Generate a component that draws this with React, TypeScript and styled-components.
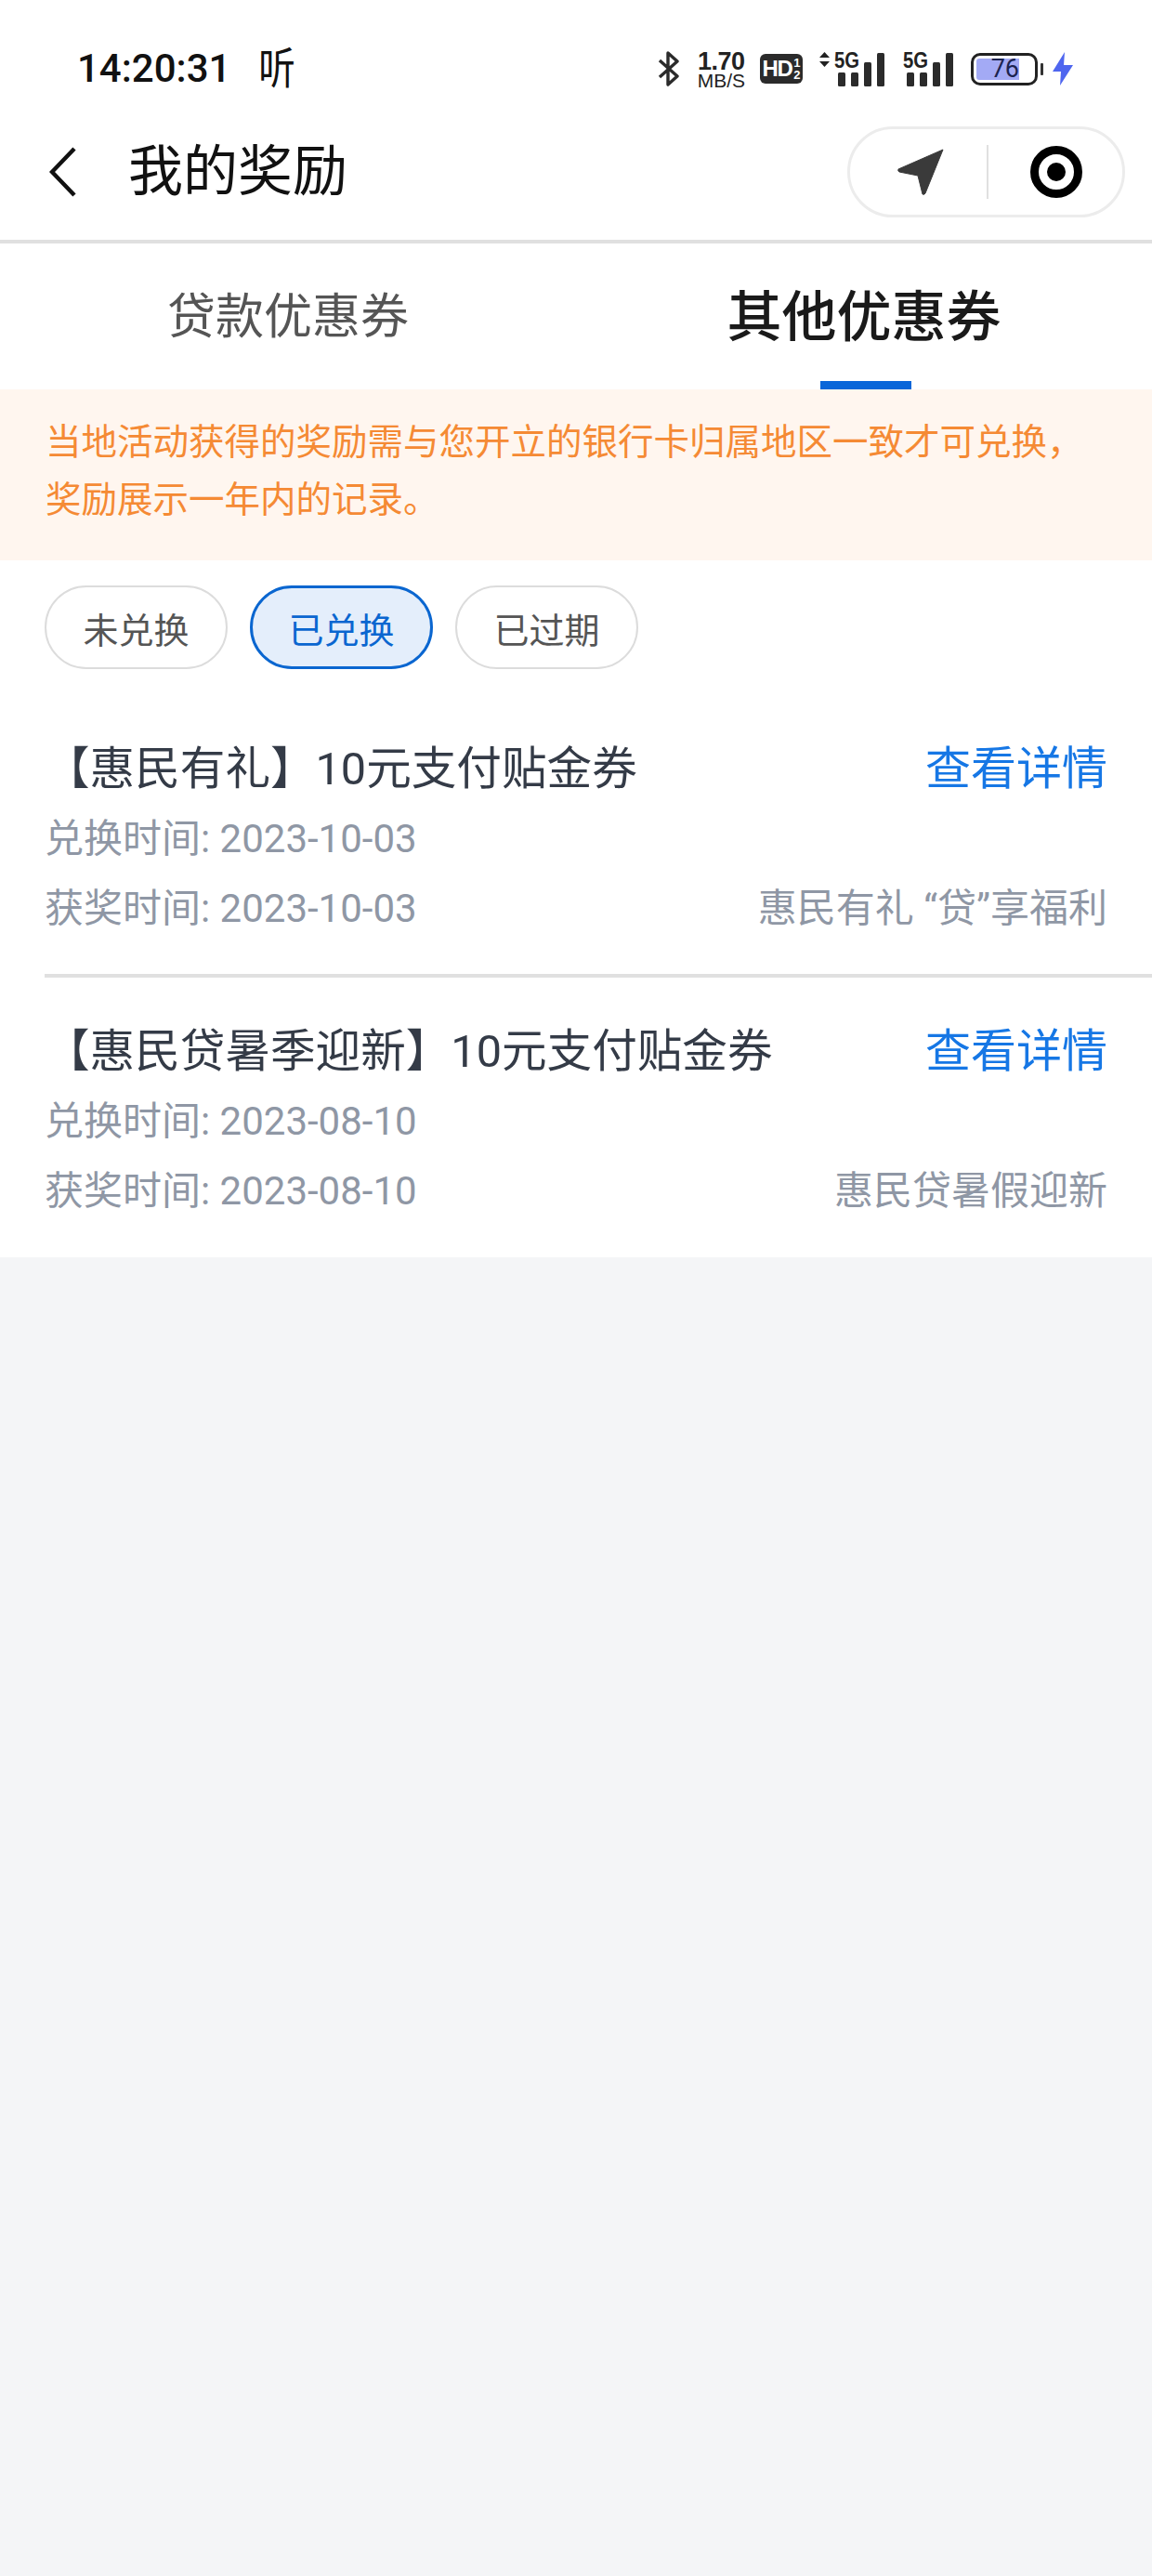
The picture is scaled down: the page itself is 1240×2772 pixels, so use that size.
import styled, { createGlobalStyle } from 'styled-components';

const GlobalStyle = createGlobalStyle`
  html, body {
    margin: 0;
    padding: 0;
    background: #f4f5f7;
  }
  * {
    box-sizing: border-box;
  }
`;

const FONT = `Roboto, "Noto Sans CJK SC", sans-serif`;

const Page = styled.main`
  width: 1240px;
  min-height: 2772px;
  background: #f4f5f7;
  font-family: ${FONT};
`;

const Top = styled.header`
  background: #fff;
  border-bottom: 4px solid #e0e0e0;
`;

const StatusBar = styled.div`
  height: 116px;
  padding: 32px 85px 0 83px;
  display: flex;
  align-items: center;
  justify-content: space-between;
`;

const StatusLeft = styled.div`
  display: flex;
  align-items: center;
  gap: 28px;
`;

const Clock = styled.span`
  font-size: 42px;
  font-weight: 500;
  line-height: 42px;
  color: #111;
`;

const ListenGlyph = styled.span`
  font-size: 44px;
  line-height: 44px;
  font-weight: 400;
  color: #111;
  display: inline-block;
  transform: scale(0.9, 1.05);
`;

const StatusRight = styled.div`
  display: flex;
  align-items: center;
`;

const Speed = styled.div`
  margin: 0 16px 0 19px;
  display: flex;
  flex-direction: column;
  align-items: center;
  color: #222;
  font-family: 'Liberation Sans', sans-serif;
`;

const SpeedValue = styled.span`
  font-size: 27px;
  line-height: 24px;
  font-weight: 700;
  letter-spacing: -0.5px;
`;

const SpeedUnit = styled.span`
  font-size: 21px;
  line-height: 17px;
  letter-spacing: 0;
`;

const HdBadge = styled.div`
  width: 46px;
  height: 32px;
  margin-right: 17px;
  border-radius: 6px;
  background: #2b2b2b;
  color: #fff;
  display: flex;
  align-items: center;
  justify-content: center;
  font-family: 'Liberation Sans', sans-serif;
  font-weight: 700;
  font-size: 24px;
  letter-spacing: -1.5px;
`;

const HdFraction = styled.span`
  display: flex;
  flex-direction: column;
  align-items: center;
  font-size: 13px;
  line-height: 13px;
  margin-left: 2px;
  letter-spacing: 0;
`;

const SignalSvg = styled.svg`
  overflow: visible;
`;

const SignalGap = styled.div`
  width: 21px;
`;

const Battery = styled.div`
  position: relative;
  width: 72px;
  height: 35px;
  margin-left: 19px;
  border: 3px solid #222;
  border-radius: 10px;
  display: flex;
  align-items: center;
  justify-content: flex-end;
  padding-right: 17px;
  color: #1c2350;
  font-size: 27px;
  font-weight: 400;
`;

const BatteryFill = styled.div<{ $level: number }>`
  position: absolute;
  left: 3px;
  top: 3px;
  bottom: 3px;
  width: ${(props) => props.$level * 60}px;
  background: #a3aaf5;
  border-radius: 3px 0 0 3px;
`;

const BatteryText = styled.span`
  position: relative;
  line-height: 27px;
`;

const BatteryCap = styled.div`
  width: 3px;
  height: 13px;
  margin-left: 3px;
  background: #333;
  border-radius: 1px;
`;

const Bolt = styled.svg`
  margin-left: 10px;
`;

const NavBar = styled.nav`
  height: 142px;
  padding: 0 29px 5px 53px;
  display: flex;
  align-items: center;
`;

const PageTitle = styled.h1`
  margin: 0 0 0 55px;
  flex: 1;
  font-size: 59px;
  line-height: 64px;
  font-weight: 400;
  color: #111;
`;

const Capsule = styled.div`
  width: 299px;
  height: 98px;
  border: 3px solid #ececec;
  border-radius: 49px;
  display: flex;
  align-items: center;
  padding-left: 51px;
`;

const CapsuleDivider = styled.div`
  width: 2px;
  height: 58px;
  margin: 0 45px 0 46px;
  background: #e0e0e0;
`;

const Tabs = styled.div`
  height: 157px;
  background: #fff;
  display: flex;
`;

const Tab = styled.div<{ $active?: boolean }>`
  position: relative;
  flex: 1;
  display: flex;
  justify-content: center;
  padding-top: 45px;
  font-size: ${(props) => (props.$active ? '59px' : '52px')};
  line-height: 70px;
  font-weight: ${(props) => (props.$active ? 500 : 400)};
  color: ${(props) => (props.$active ? '#1a1a1a' : '#555')};
  ${(props) =>
    props.$active &&
    `
    &::after {
      content: '';
      position: absolute;
      left: 263px;
      bottom: 0;
      width: 98px;
      height: 9px;
      background: #0a66d9;
    }
  `}
`;

const Notice = styled.div`
  height: 184px;
  padding: 26px 48px 0 49px;
  background: #fff6ef;
  color: #f58a34;
  font-size: 38.5px;
  line-height: 62px;
`;

const Filters = styled.div`
  background: #fff;
  padding: 27px 48px 30px;
  display: flex;
  gap: 24px;
`;

const Chip = styled.div<{ $active?: boolean }>`
  width: 197px;
  height: 90px;
  border-radius: 45px;
  display: flex;
  align-items: center;
  justify-content: center;
  font-size: 38px;
  color: ${(props) => (props.$active ? '#0a66d0' : '#555')};
  background: ${(props) => (props.$active ? '#e4eefb' : '#fff')};
  border: ${(props) => (props.$active ? '3px solid #0a66d0' : '2px solid #dcdcdc')};
`;

const List = styled.section`
  background: #fff;
  padding: 0 0 1px 48px;
`;

const Reward = styled.article`
  padding: 47px 48px 33px 0;
  & + & {
    padding-top: 49px;
    border-top: 4px solid #e0e0e0;
  }
`;

const Row = styled.div`
  display: flex;
  justify-content: space-between;
  align-items: center;
  height: 75px;
`;

const TitleRow = styled(Row)`
  height: 62px;
  margin-bottom: 6px;
`;

const RewardTitle = styled.div`
  font-size: 48.6px;
  line-height: 62px;
  color: #343b47;
`;

const Detail = styled.div`
  font-size: 49px;
  line-height: 62px;
  color: #1677e5;
`;

const Meta = styled.div`
  font-size: 42px;
  line-height: 60px;
  color: #8f97a5;
`;

function SignalIcon({ arrows }: { arrows?: boolean }) {
  return (
    <SignalSvg width={arrows ? 70 : 54} height="38" viewBox={arrows ? '-18 0 70 38' : '-1 0 54 38'}>
      {arrows && (
        <>
          <path d="M-11.5 1 L-6 7 H-17 Z" fill="#222" />
          <path d="M-11.5 17 L-6 11 H-17 Z" fill="#222" />
        </>
      )}
      <text x="-1" y="18" fontFamily="Liberation Sans" fontWeight="700" fontSize="23" fill="#222" textLength="27" lengthAdjust="spacingAndGlyphs">
        5G
      </text>
      <rect x="3" y="23" width="8" height="15" rx="1.5" fill="#2b2b2b" />
      <rect x="17" y="23" width="8" height="15" rx="1.5" fill="#2b2b2b" />
      <rect x="31" y="12" width="8" height="26" rx="1.5" fill="#2b2b2b" />
      <rect x="45" y="2" width="8" height="36" rx="1.5" fill="#2b2b2b" />
    </SignalSvg>
  );
}

interface IReward {
  title: string;
  exchanged: string;
  won: string;
  activity: string;
}

const rewards: IReward[] = [
  {
    title: '【惠民有礼】10元支付贴金券',
    exchanged: '2023-10-03',
    won: '2023-10-03',
    activity: '惠民有礼 “贷”享福利',
  },
  {
    title: '【惠民贷暑季迎新】10元支付贴金券',
    exchanged: '2023-08-10',
    won: '2023-08-10',
    activity: '惠民贷暑假迎新',
  },
];

function App() {
  return (
    <Page>
      <GlobalStyle />
      <Top>
        <StatusBar>
          <StatusLeft>
            <Clock>14:20:31</Clock>
            <ListenGlyph>听</ListenGlyph>
          </StatusLeft>
          <StatusRight>
            <svg width="24" height="38" viewBox="0 0 24 38" fill="none" stroke="#2b2b2b" strokeWidth="3.4" strokeLinejoin="round">
              <path d="M2 10 L21 27 L11 36 V2 L21 11 L2 28" />
            </svg>
            <Speed>
              <SpeedValue>1.70</SpeedValue>
              <SpeedUnit>MB/S</SpeedUnit>
            </Speed>
            <HdBadge>
              HD
              <HdFraction>
                <span>1</span>
                <span>2</span>
              </HdFraction>
            </HdBadge>
            <SignalIcon arrows />
            <SignalGap />
            <SignalIcon />
            <Battery>
              <BatteryFill $level={0.76} />
              <BatteryText>76</BatteryText>
            </Battery>
            <BatteryCap />
            <Bolt width="22" height="36" viewBox="0 0 22 36">
              <path d="M13 0 L0 21 H9 L8 36 L22 14 H12 Z" fill="#4f66ef" />
            </Bolt>
          </StatusRight>
        </StatusBar>
        <NavBar>
          <svg width="30" height="54" viewBox="0 0 30 54" fill="none" stroke="#111" strokeWidth="4.5">
            <path d="M27 2 L3 27 L27 52" />
          </svg>
          <PageTitle>我的奖励</PageTitle>
          <Capsule>
            <svg width="50" height="50" viewBox="0 0 50 50">
              <path d="M49 1 L1 22 Q0 24 2 25 L22 29 L27 49 Q29 50 30 48 Z" fill="#3a3a3a" stroke="#3a3a3a" strokeWidth="1" strokeLinejoin="round" />
            </svg>
            <CapsuleDivider />
            <svg width="56" height="56" viewBox="0 0 56 56">
              <circle cx="28" cy="28" r="23.5" fill="none" stroke="#000" strokeWidth="9" />
              <circle cx="28" cy="28" r="10" fill="#000" />
            </svg>
          </Capsule>
        </NavBar>
      </Top>
      <Tabs>
        <Tab>贷款优惠券</Tab>
        <Tab $active>其他优惠券</Tab>
      </Tabs>
      <Notice>
        当地活动获得的奖励需与您开立的银行卡归属地区一致才可兑换，
        <br />
        奖励展示一年内的记录。
      </Notice>
      <Filters>
        <Chip>未兑换</Chip>
        <Chip $active>已兑换</Chip>
        <Chip>已过期</Chip>
      </Filters>
      <List>
        {rewards.map((reward) => (
          <Reward key={reward.title}>
            <TitleRow>
              <RewardTitle>{reward.title}</RewardTitle>
              <Detail>查看详情</Detail>
            </TitleRow>
            <Row>
              <Meta>兑换时间: {reward.exchanged}</Meta>
            </Row>
            <Row>
              <Meta>获奖时间: {reward.won}</Meta>
              <Meta>{reward.activity}</Meta>
            </Row>
          </Reward>
        ))}
      </List>
    </Page>
  );
}

export default App;
